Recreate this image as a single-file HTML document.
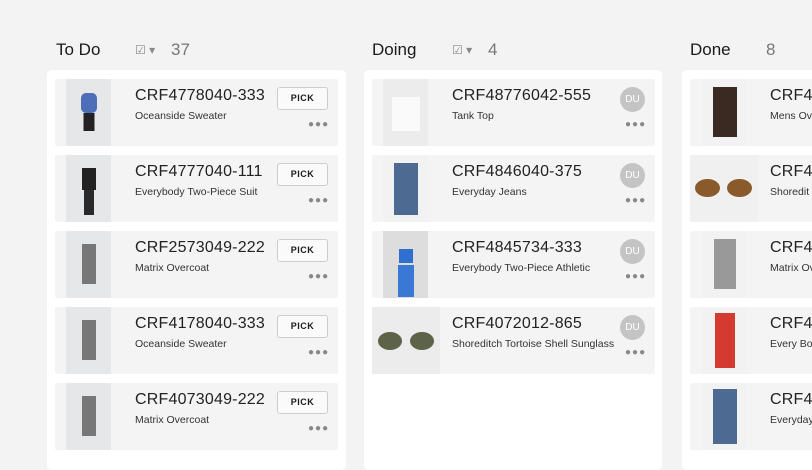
<!DOCTYPE html>
<html><head><style>
*{margin:0;padding:0;box-sizing:border-box}
body{width:812px;height:460px;background:#f3f3f3;font-family:"Liberation Sans",sans-serif;overflow:hidden;position:relative;color:#1a1a1a}
.h{position:absolute;top:40px;font-size:17px}
.cnt{position:absolute;top:40px;font-size:17px;color:#777}
.ic{position:absolute;top:43px;font-size:12px;color:#888}
.panel{position:absolute;top:70px;background:#fff;border-radius:5px;height:400px}
.card{position:absolute;left:8px;width:283px;height:67px;background:#f4f4f4;border-radius:2px}
.img{position:absolute;left:11px;top:0;width:45px;height:67px;background:#e6e7e9;overflow:hidden}
.code{position:absolute;left:80px;top:8px;font-size:16px;letter-spacing:0.2px;color:#222}
.name{position:absolute;left:80px;top:31px;font-size:10.5px;color:#333}
.pick{position:absolute;left:222px;top:8px;width:51px;height:23px;border:1px solid #ccc;border-radius:3px;background:#fafafa;font-size:9px;font-weight:bold;text-align:center;line-height:21px;letter-spacing:.5px}
.du{position:absolute;left:248px;top:8px;width:25px;height:25px;border-radius:50%;background:#c4c4c4;color:#fff;font-size:10px;text-align:center;line-height:25px}
.dots{position:absolute;left:253px;top:40px;font-size:10px;color:#888;letter-spacing:1px}
.p{position:absolute;left:50%;transform:translateX(-50%)}
</style></head><body>
<div class="h" style="left:56px">To Do</div>
<div class="ic" style="left:135px">☑ ▾</div>
<div class="cnt" style="left:171px">37</div>
<div class="h" style="left:372px">Doing</div>
<div class="ic" style="left:452px">☑ ▾</div>
<div class="cnt" style="left:488px">4</div>
<div class="h" style="left:690px">Done</div>
<div class="cnt" style="left:766px">8</div>

<div class="panel" style="left:47px;width:299px">
 <div class="card" style="top:9px"><div class="img"><div class="p" style="top:14px;width:16px;height:20px;background:#4d6fb8;border-radius:5px"></div><div class="p" style="top:34px;width:11px;height:18px;background:#222"></div></div><div class="code">CRF4778040-333</div><div class="name">Oceanside Sweater</div><div class="pick">PICK</div><div class="dots">●●●</div></div>
 <div class="card" style="top:85px"><div class="img"><div class="p" style="top:13px;width:14px;height:22px;background:#222"></div><div class="p" style="top:35px;width:10px;height:25px;background:#2a2a2a"></div></div><div class="code">CRF4777040-111</div><div class="name">Everybody Two-Piece Suit</div><div class="pick">PICK</div><div class="dots">●●●</div></div>
 <div class="card" style="top:161px"><div class="img"><div class="p" style="top:13px;width:14px;height:40px;background:#777"></div></div><div class="code">CRF2573049-222</div><div class="name">Matrix Overcoat</div><div class="pick">PICK</div><div class="dots">●●●</div></div>
 <div class="card" style="top:237px"><div class="img"><div class="p" style="top:13px;width:14px;height:40px;background:#777"></div></div><div class="code">CRF4178040-333</div><div class="name">Oceanside Sweater</div><div class="pick">PICK</div><div class="dots">●●●</div></div>
 <div class="card" style="top:313px"><div class="img"><div class="p" style="top:13px;width:14px;height:40px;background:#777"></div></div><div class="code">CRF4073049-222</div><div class="name">Matrix Overcoat</div><div class="pick">PICK</div><div class="dots">●●●</div></div>
</div>

<div class="panel" style="left:364px;width:298px">
 <div class="card" style="top:9px"><div class="img" style="background:#ececec"><div class="p" style="top:18px;width:28px;height:34px;background:#fafafa"></div></div><div class="code">CRF48776042-555</div><div class="name">Tank Top</div><div class="du">DU</div><div class="dots">●●●</div></div>
 <div class="card" style="top:85px"><div class="img" style="background:#f2f2f2"><div class="p" style="top:8px;width:24px;height:52px;background:#4d6a92"></div></div><div class="code">CRF4846040-375</div><div class="name">Everyday Jeans</div><div class="du">DU</div><div class="dots">●●●</div></div>
 <div class="card" style="top:161px"><div class="img" style="background:#ddd"><div class="p" style="top:18px;width:14px;height:14px;background:#2f6fd0"></div><div class="p" style="top:34px;width:16px;height:32px;background:#3a78d6"></div></div><div class="code">CRF4845734-333</div><div class="name">Everybody Two-Piece Athletic</div><div class="du">DU</div><div class="dots">●●●</div></div>
 <div class="card" style="top:237px"><div class="img" style="left:0;width:68px;background:#ececec"><div style="position:absolute;left:6px;top:25px;width:24px;height:18px;border-radius:50%;background:#5d6349"></div><div style="position:absolute;left:38px;top:25px;width:24px;height:18px;border-radius:50%;background:#5d6349"></div></div><div class="code">CRF4072012-865</div><div class="name">Shoreditch Tortoise Shell Sunglass</div><div class="du">DU</div><div class="dots">●●●</div></div>
</div>

<div class="panel" style="left:682px;width:140px">
 <div class="card" style="top:9px"><div class="img" style="left:12px;background:#f2f2f2"><div class="p" style="top:8px;width:24px;height:50px;background:#3a2a22"></div></div><div class="code">CRF48</div><div class="name">Mens Ov</div></div>
 <div class="card" style="top:85px"><div class="img" style="left:0;width:68px;background:#f0f0f0"><div style="position:absolute;left:5px;top:24px;width:25px;height:18px;border-radius:50%;background:#8a5a2a"></div><div style="position:absolute;left:37px;top:24px;width:25px;height:18px;border-radius:50%;background:#8a5a2a"></div></div><div class="code">CRF40</div><div class="name">Shoredit</div></div>
 <div class="card" style="top:161px"><div class="img" style="left:12px;background:#f2f2f2"><div class="p" style="top:8px;width:22px;height:50px;background:#999"></div></div><div class="code">CRF48</div><div class="name">Matrix Ov</div></div>
 <div class="card" style="top:237px"><div class="img" style="left:12px;background:#f2f2f2"><div class="p" style="top:6px;width:20px;height:55px;background:#d43a30"></div></div><div class="code">CRF48</div><div class="name">Every Bo</div></div>
 <div class="card" style="top:313px"><div class="img" style="left:12px;background:#f2f2f2"><div class="p" style="top:6px;width:24px;height:55px;background:#4d6a92"></div></div><div class="code">CRF48</div><div class="name">Everyday</div></div>
</div>
</body></html>
